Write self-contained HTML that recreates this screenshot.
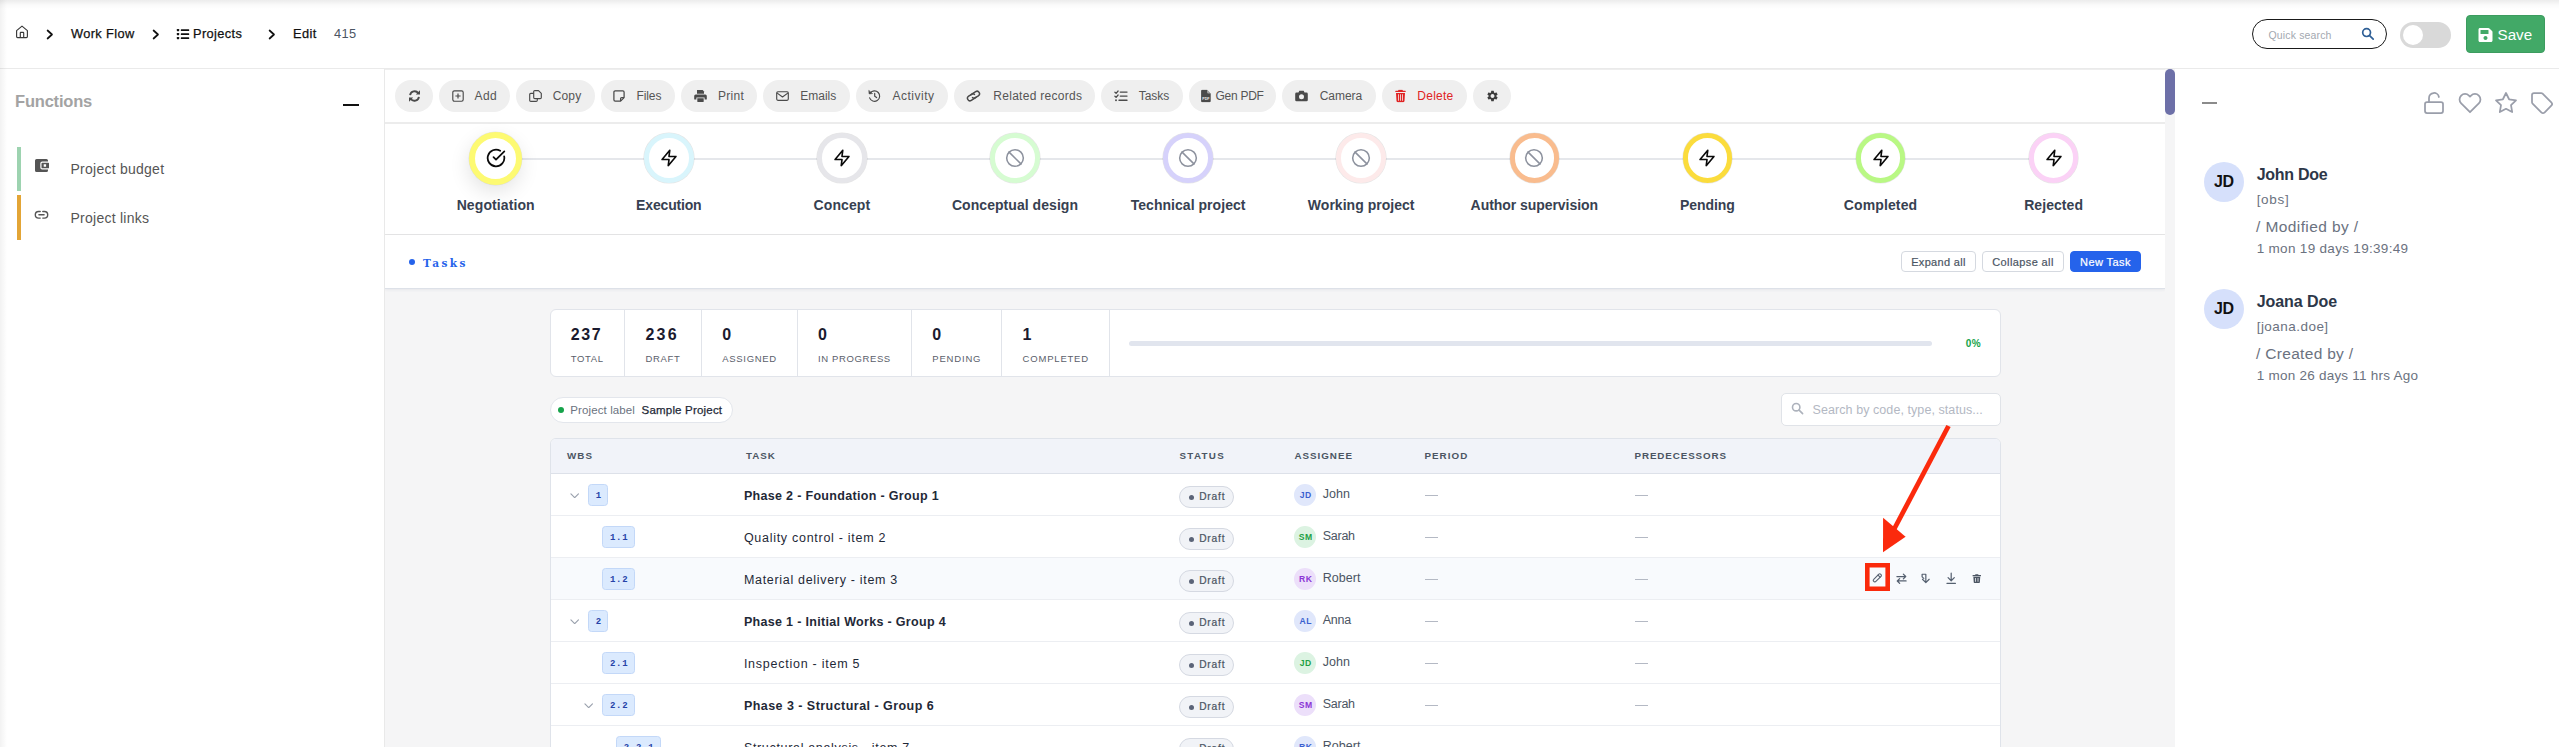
<!DOCTYPE html>
<html lang="en">
<head>
<meta charset="utf-8">
<title>Edit 415 - Projects</title>
<style>
*{box-sizing:border-box;margin:0;padding:0}
html,body{width:2559px;height:747px;overflow:hidden;background:#fff}
body{font-family:"Liberation Sans",Arial,sans-serif;color:#222;position:relative;-webkit-font-smoothing:antialiased}
.abs{position:absolute}
.t{position:absolute;white-space:nowrap;line-height:1;transform:translateY(-50%)}
svg{display:block}
/* ---------- top bar ---------- */
#topbar{position:absolute;left:0;top:0;width:2559px;height:69px;background:#fff}
#topline{position:absolute;left:0;top:68px;width:2559px;height:1px;background:#eaeaea}
#mainline{position:absolute;left:385px;top:69px;width:1780px;height:1px;background:#eeeeee}
#topshadow{position:absolute;left:0;top:0;width:2559px;height:9px;background:linear-gradient(rgba(0,0,0,.075),rgba(0,0,0,.02) 55%,rgba(0,0,0,0))}
#leftshadow{position:absolute;left:0;top:0;width:7px;height:747px;background:linear-gradient(90deg,rgba(0,0,0,.05),rgba(0,0,0,0))}
.crumb{font-size:12.8px;color:#111;letter-spacing:.38px;-webkit-text-stroke:.25px #111}
/* ---------- sidebar ---------- */
#sidebar{position:absolute;left:0;top:69px;width:385px;height:678px;background:#fff;border-right:1px solid #e9e9e9}
/* ---------- main ---------- */
#main{position:absolute;left:385px;top:69px;width:1780px;height:678px;background:#f5f5f6;overflow:hidden}
#toolbar{position:absolute;left:0;top:0;width:1780px;height:55px;background:#fff;border-bottom:2px solid #ececec}
.btn{position:absolute;top:11px;height:32px;border-radius:16px;background:#efefef;color:#555;font-size:12px}
.btn svg{position:absolute;top:50%;transform:translateY(-50%)}
.btn span{position:absolute;top:50%;transform:translateY(-50%);white-space:nowrap;line-height:1;letter-spacing:.35px}
#stepper{position:absolute;left:0;top:55px;width:1780px;height:111px;background:#fff;border-bottom:1px solid #e6e6e6}
.step{position:absolute;top:0;width:0;height:111px}
.step .ring{position:absolute;left:-24.800px;top:9.200px;width:49.600px;height:49.600px;border-radius:50%;border:5.500px solid #ddd;background:#fff;box-shadow:0 0 0 .6px rgba(0,0,0,.10)}
.step .ring svg{position:absolute;left:50%;top:50%;transform:translate(-50%,-50%)}
.step.act .ring{left:-26.500px;top:7.500px;width:53px;height:53px;border-width:6px;box-shadow:0 0 0 .5px rgba(0,0,0,.08),-1px 7px 20px rgba(0,0,0,.11)}
.step span{position:absolute;left:0;top:80.500px;transform:translate(-50%,-50%);white-space:nowrap;font-size:14px;font-weight:700;color:#374151;line-height:1}
#tasksbar{position:absolute;left:0;top:166px;width:1780px;height:54px;background:#fff;border-bottom:1px solid #dde1e8;box-shadow:0 1px 3px rgba(30,40,80,.07)}
.obtn{position:absolute;top:16px;height:21px;border:1px solid #d5d9e0;border-radius:4px;background:#fff;color:#4b5563;font-size:11px;text-align:center}
.obtn span{position:absolute;left:50%;top:50%;transform:translate(-50%,-50%);white-space:nowrap;line-height:1;-webkit-text-stroke:.2px currentColor}
.obtn.pri{background:#2563eb;border-color:#2563eb;color:#fff}
#stats{position:absolute;background:#fff;border:1px solid #e1e4ea;border-radius:6px}
#stats .vdiv{position:absolute;top:0;width:1px;height:100%;background:#e1e4ea}
#stats .t{margin-left:-1px;margin-top:-1px}
#stats .num{margin-top:0;font-size:16px;font-weight:700;color:#1a1a2e}
#stats .lab{font-size:9.500px;color:#5a606b}
#plabel{position:absolute;background:#fff;border:1px solid #e3e6ec;border-radius:13px;font-size:11.500px}
#plabel i{position:absolute;left:7.600px;top:9.800px;width:6px;height:6px;border-radius:50%;background:#16a34a}
#plabel .t{margin-left:-1px;margin-top:-1px}
#tsearch{position:absolute;background:#fff;border:1px solid #e0e3e8;border-radius:5px}
#tsearch .t{margin-left:-1px;margin-top:-1px}
#tbl{position:absolute;background:#fff;border:1px solid #dfe3ea;border-radius:6px 6px 0 0;overflow:hidden}
#tbl .thead{position:absolute;left:0;top:0;width:100%;background:#f1f3f9;border-bottom:1px solid #dde1e9;font-size:9.800px;font-weight:700;color:#4b5563}
#tbl .t{margin-left:-1px;margin-top:-1px}
.tr{position:absolute;left:0;width:100%;border-bottom:1px solid #eceef2}
.tr.hov{background:#f8fafd}
.tr .chev{position:absolute;top:18.600px;margin-left:-2.400px}
.tr .wbs{position:absolute;top:10.300px;height:21.600px;margin-left:-1px;border:1px solid #c3d8f8;border-radius:3.500px;background:#dbeafe}
.tr .wbs b{position:absolute;left:50%;top:50%;transform:translate(-50%,-50%);font-family:"Liberation Mono",monospace;font-size:9px;font-weight:700;color:#2643a8;line-height:1;white-space:nowrap;letter-spacing:.75px;margin-left:.4px;margin-top:.9px}
.tr .task{top:23.200px;color:#1f2937}
.tr .st{position:absolute;left:628.30px;top:12.200px;width:54.800px;height:22px;border:1px solid #d5d9e2;border-radius:11px;background:#f1f3f7}
.tr .st i{position:absolute;left:8.200px;top:7.600px;width:5px;height:5px;border-radius:50%;background:#5b6478}
.tr .st b{position:absolute;left:18.800px;top:50%;transform:translateY(-50%);font-size:10.200px;font-weight:400;-webkit-text-stroke:.22px #4b5563;color:#4b5563;letter-spacing:.8px;line-height:1;margin-top:.3px}
.tr .av{position:absolute;left:743.40px;top:10.100px;width:21.800px;height:21.800px;border-radius:50%}
.tr .av b{position:absolute;left:50%;top:50%;transform:translate(-50%,-50%);font-size:8.600px;font-weight:700;letter-spacing:.5px;line-height:1;margin-left:.3px}
.av.b{background:#e0e7fb}.av.b b{color:#3b5fd0}
.av.g{background:#dcf3e2}.av.g b{color:#22a045}
.av.p{background:#ecdffa}.av.p b{color:#8b35d6}
.tr .nm{margin-top:.4px;left:772.70px;top:21.200px;font-size:12.500px;color:#4b5563}
.tr .dash{position:absolute;top:21.200px;width:13px;height:1px;background:#b4b9c4;margin-left:-1px}
/* ---------- scrollbar ---------- */
#sbtrack{position:absolute;left:2165px;top:69px;width:10.500px;height:678px;background:#f5f5f6}
#sbthumb{position:absolute;left:2165px;top:69px;width:10px;height:46px;border-radius:5px;background:#6d70a8}
/* ---------- right panel ---------- */
#right{position:absolute;left:2175px;top:69px;width:384px;height:678px;background:#fff}
.person{position:absolute;left:0;width:384px;height:100px}
.person .av{position:absolute;left:29px;top:0;width:40px;height:40px;border-radius:50%;background:#d6e0fb}
.person .av span{position:absolute;left:50%;top:50%;transform:translate(-50%,-50%);font-size:16px;font-weight:700;color:#111;letter-spacing:-.2px;line-height:1;margin-left:-.1px}
.person .t{left:81.700px}
.person .nm{font-size:16px;font-weight:700;color:#2d3748}
.person .us{font-size:13.500px;color:#6b7280}
.person .vb{font-size:15.500px;color:#6b7280;margin-left:-.6px}
.person .dt{font-size:13.500px;color:#6b7280}
</style>
</head>
<body>
<div id="topbar">
  <svg class="abs" style="left:15px;top:25px" width="14" height="14" viewBox="0 0 14 14" fill="none" stroke="#3a3a3a" stroke-width="1.15" stroke-linejoin="round" stroke-linecap="round"><path d="M1.6 5.6 L7 1.1 L12.4 5.6 V11.6 a1 1 0 0 1 -1 1 H2.6 a1 1 0 0 1 -1 -1 Z"/><path d="M5.3 12.4 V7.9 a.5 .5 0 0 1 .5 -.5 H8.2 a.5 .5 0 0 1 .5 .5 V12.4"/></svg>
  <svg class="abs" style="left:45px;top:28px" width="10" height="13" viewBox="0 0 10 13" fill="none" stroke="#111" stroke-width="1.7" stroke-linecap="round" stroke-linejoin="round"><path d="M2.600 2.500 L7 6.500 L2.600 10.500"/></svg>
  <span class="t crumb" style="left:71px;top:34px">Work Flow</span>
  <svg class="abs" style="left:151px;top:28px" width="10" height="13" viewBox="0 0 10 13" fill="none" stroke="#111" stroke-width="1.7" stroke-linecap="round" stroke-linejoin="round"><path d="M2.600 2.500 L7 6.500 L2.600 10.500"/></svg>
  <svg class="abs" style="left:176px;top:28px" width="14" height="12" viewBox="0 0 14 12" fill="#111"><rect x=".8" y="1" width="2.4" height="2.2" rx=".6"/><rect x=".8" y="5" width="2.4" height="2.2" rx=".6"/><rect x=".8" y="9" width="2.4" height="2.2" rx=".6"/><rect x="4.8" y="1.3" width="8.4" height="1.6" rx=".5"/><rect x="4.8" y="5.3" width="8.4" height="1.6" rx=".5"/><rect x="4.8" y="9.3" width="8.4" height="1.6" rx=".5"/></svg>
  <span class="t crumb" style="left:193px;top:34px">Projects</span>
  <svg class="abs" style="left:266.800px;top:28px" width="10" height="13" viewBox="0 0 10 13" fill="none" stroke="#111" stroke-width="1.7" stroke-linecap="round" stroke-linejoin="round"><path d="M2.600 2.500 L7 6.500 L2.600 10.500"/></svg>
  <span class="t crumb" style="left:293px;top:34px">Edit</span>
  <span class="t crumb" style="left:334px;top:34px;color:#4b5563;-webkit-text-stroke:0">415</span>
  <!-- quick search -->
  <div class="abs" id="qsearch" style="left:2252px;top:19px;width:135px;height:30px;border:1.5px solid #1a1a1a;border-radius:15px;background:#fff">
    <span class="t" style="left:15.500px;top:14.800px;font-size:10.500px;color:#a3a8b0;letter-spacing:.15px">Quick search</span>
    <svg class="abs" style="left:107.500px;top:7px" width="14" height="14" viewBox="0 0 14 14" fill="none" stroke="#2f5f96" stroke-width="1.7" stroke-linecap="round"><circle cx="5.6" cy="5.6" r="3.9"/><path d="M8.6 8.6 L12.2 12.2"/></svg>
  </div>
  <!-- toggle -->
  <div class="abs" style="left:2400px;top:22px;width:51px;height:26px;border-radius:13px;background:#d9d9d9">
    <div class="abs" style="left:2.600px;top:3px;width:20.400px;height:20.400px;border-radius:50%;background:#fff"></div>
  </div>
  <!-- save -->
  <div class="abs" style="left:2466px;top:15px;width:79px;height:38px;border-radius:4px;background:#42a967;border:1px solid #3c9c5f">
    <svg class="abs" style="left:11px;top:10.500px" width="15" height="16" viewBox="0 0 448 512" fill="#fff"><path d="M433.9 129.900l-83.900-83.900A48 48 0 0 0 316.100 32H48C21.500 32 0 53.500 0 80v352c0 26.500 21.500 48 48 48h352c26.500 0 48-21.500 48-48V163.900a48 48 0 0 0-14.100-33.900zM224 416c-35.300 0-64-28.700-64-64s28.700-64 64-64 64 28.700 64 64-28.700 64-64 64zm96-304.500V212c0 6.600-5.400 12-12 12H76c-6.600 0-12-5.400-12-12V108c0-6.600 5.400-12 12-12h228.500c3.200 0 6.200 1.300 8.500 3.500l3.500 3.500A12 12 0 0 1 320 111.500z"/></svg>
    <span class="t" style="left:30.500px;top:18.700px;font-size:15.200px;color:#fff;letter-spacing:0">Save</span>
  </div>
</div>
<div id="sidebar">
  <span class="t" style="left:15px;top:31.500px;font-size:16.500px;font-weight:700;color:#a3a3a3;letter-spacing:-.2px">Functions</span>
  <div class="abs" style="left:343px;top:34.5px;width:16px;height:2.4px;background:#111"></div>
  <div class="abs" style="left:17px;top:78px;width:4px;height:44px;background:#9dd3b0"></div>
  <svg class="abs" style="left:35px;top:90px" width="14" height="13" viewBox="0 0 14 13"><path fill="#555" fill-rule="evenodd" d="M1.6 0 H11.4 A1.6 1.6 0 0 1 13 1.6 V2.6 H7.2 A1.9 1.9 0 0 0 5.300 4.500 V8.500 A1.9 1.9 0 0 0 7.200 10.400 H13 V11.400 A1.600 1.600 0 0 1 11.400 13 H1.600 A1.600 1.600 0 0 1 0 11.400 V1.600 A1.600 1.600 0 0 1 1.600 0 Z M7.400 3.700 H13.400 A.6 .6 0 0 1 14 4.300 V8.700 A.6 .6 0 0 1 13.400 9.300 H7.400 A.9 .9 0 0 1 6.500 8.400 V4.600 A.9 .9 0 0 1 7.400 3.700 Z M8.700 5.300 V7.700 H11.100 V5.300 Z"/></svg>
  <span class="t" style="left:70.500px;top:100px;font-size:14px;color:#555;letter-spacing:.25px">Project budget</span>
  <div class="abs" style="left:17px;top:126px;width:4px;height:45px;background:#e3a536"></div>
  <svg class="abs" style="left:34px;top:141px" width="15" height="10" viewBox="0 0 15 10" fill="none" stroke="#555" stroke-width="1.4" stroke-linecap="round"><path d="M6.200 1.500 H4.600 a3.300 3.300 0 0 0 0 6.600 H6.200 M8.800 1.500 H10.400 a3.300 3.300 0 0 1 0 6.600 H8.800 M4.900 4.800 H10.100"/></svg>
  <span class="t" style="left:70.500px;top:149px;font-size:14px;color:#555;letter-spacing:.25px">Project links</span>
</div>
<div id="main">
  <div id="toolbar">
  <div class="btn" style="left:10px;width:38px"><svg style="left:12.5px" width="13" height="13" viewBox="0 0 13 13" fill="none" stroke="#4a4a4a" stroke-width="1.9"><path d="M2.1 5.6 A4.500 4.500 0 0 1 10.300 3.700"/><path d="M10.900 7.400 A4.500 4.500 0 0 1 2.700 9.300"/><path d="M12 .8 V5 H7.800 Z" fill="#4a4a4a" stroke="none"/><path d="M1 12.200 V8 H5.200 Z" fill="#4a4a4a" stroke="none"/></svg></div>
  <div class="btn" style="left:54px;width:71px"><svg style="left:13px" width="12" height="12" viewBox="0 0 12 12" fill="none" stroke="#4a4a4a" stroke-width="1.15"><rect x=".8" y=".8" width="10.400" height="10.400" rx="1.600"/><path d="M6 3.400 V8.600 M3.400 6 H8.600" stroke-width="1.2"/></svg><span style="left:35.6px;letter-spacing:0.32px">Add</span></div>
  <div class="btn" style="left:131px;width:79px"><svg style="left:12.500px" width="13" height="12" viewBox="0 0 13 12" fill="none" stroke="#4a4a4a" stroke-width="1.150" stroke-linejoin="round"><path d="M4.700 1.700 a1.100 1.100 0 0 1 1.100 -1.100 H9.500 L12.300 3.400 V7.500 a1.100 1.100 0 0 1 -1.100 1.100 H5.800 a1.100 1.100 0 0 1 -1.100 -1.100 Z"/><path d="M4.700 3.400 H1.800 a1.100 1.100 0 0 0 -1.100 1.100 V10.300 a1.100 1.100 0 0 0 1.100 1.100 H7.200 a1.100 1.100 0 0 0 1.100 -1.100 V8.600"/></svg><span style="left:36.7px;letter-spacing:0.16px">Copy</span></div>
  <div class="btn" style="left:216px;width:74px"><svg style="left:12.4px" width="12" height="12" viewBox="0 0 12 12" fill="none" stroke="#4a4a4a" stroke-width="1.25" stroke-linejoin="round"><path d="M2.200 .9 H9.800 a1.300 1.300 0 0 1 1.300 1.300 V7.600 L7.600 11.100 H2.200 a1.300 1.300 0 0 1 -1.300 -1.300 V2.200 a1.300 1.300 0 0 1 1.300 -1.300 Z"/><path d="M11 7.600 H8.600 a1 1 0 0 0 -1 1 V11"/></svg><span style="left:35.5px;letter-spacing:-0.11px">Files</span></div>
  <div class="btn" style="left:296px;width:76px"><svg style="left:12.6px" width="13" height="13" viewBox="0 0 13 13" fill="#4a4a4a"><path d="M3 .6 H8.700 L10 1.900 V4.200 H3 Z"/><path d="M1.700 4.900 H11.300 A1.500 1.500 0 0 1 12.800 6.400 V9.600 a.5 .5 0 0 1 -.5 .5 H10.600 V7.900 H2.400 V10.100 H.7 a.5 .5 0 0 1 -.5 -.5 V6.400 A1.500 1.500 0 0 1 1.700 4.900 Z"/><path d="M3.300 8.800 H9.700 V12 a.4 .4 0 0 1 -.4 .4 H3.700 a.4 .4 0 0 1 -.4 -.4 Z"/></svg><span style="left:36.9px;letter-spacing:0.3px">Print</span></div>
  <div class="btn" style="left:378px;width:87px"><svg style="left:12.7px" width="13" height="10" viewBox="0 0 13 10" fill="none" stroke="#4a4a4a" stroke-width="1.15" stroke-linejoin="round"><rect x=".7" y=".7" width="11.600" height="8.600" rx="1.200"/><path d="M.9 1.900 L6.500 6 L12.100 1.900"/></svg><span style="left:37.3px;letter-spacing:-0.02px">Emails</span></div>
  <div class="btn" style="left:471px;width:92px"><svg style="left:11.8px" width="13" height="13" viewBox="0 0 13 13" fill="none" stroke="#4a4a4a" stroke-width="1.2" stroke-linecap="round"><path d="M2.200 3.600 A5.200 5.200 0 1 1 1.600 8.400"/><path d="M.8 1.200 L1.100 4.400 L4.200 4.100 Z" fill="#4a4a4a" stroke-width=".6" stroke-linejoin="round"/><path d="M6.700 3.900 V6.700 L8.600 8.100"/></svg><span style="left:36.4px;letter-spacing:0.52px">Activity</span></div>
  <div class="btn" style="left:569px;width:141px"><svg style="left:12.300px" width="15" height="13" viewBox="0 0 15 13" fill="none" stroke="#4a4a4a" stroke-width="1.500" stroke-linecap="round"><g transform="rotate(-33 7.500 6.500)"><path d="M8.900 8.950 H3.300 a2.450 2.450 0 0 1 0 -4.900 H6.900 a2.450 2.450 0 0 1 2.300 1.600"/><path d="M6.100 4.050 H11.700 a2.450 2.450 0 0 1 0 4.900 H8.100 a2.450 2.450 0 0 1 -2.300 -1.600"/></g></svg><span style="left:39.3px;letter-spacing:0.28px">Related records</span></div>
  <div class="btn" style="left:716px;width:82px"><svg style="left:12.5px" width="14" height="12" viewBox="0 0 14 12" fill="none" stroke="#4a4a4a" stroke-width="1.25" stroke-linecap="round" stroke-linejoin="round"><path d="M.9 2.200 L2.100 3.300 L4.100 1"/><path d="M.9 6.200 L2.100 7.300 L4.100 5"/><path d="M6.300 2.100 H13 M6.300 6.100 H13 M5 10.200 H13" stroke-width="1.35"/><circle cx="2" cy="10.200" r=".95" fill="#4a4a4a" stroke="none"/></svg><span style="left:37.7px;letter-spacing:-0.02px">Tasks</span></div>
  <div class="btn" style="left:804px;width:87px"><svg style="left:11.7px" width="10" height="13" viewBox="0 0 10 13"><path fill="#4a4a4a" d="M1.300 .3 H6.100 L9.700 3.900 V11.500 a1.200 1.200 0 0 1 -1.200 1.200 H1.300 a1.200 1.200 0 0 1 -1.200 -1.200 V1.500 A1.200 1.200 0 0 1 1.300 .3 Z"/><path fill="#efefef" d="M6.100 .3 V3.100 a.8 .8 0 0 0 .8 .8 H9.700 Z" opacity=".55"/><text x="4.900" y="10.300" font-family="Liberation Sans,sans-serif" font-size="4.200" font-weight="700" fill="#efefef" text-anchor="middle" textLength="7.200" lengthAdjust="spacingAndGlyphs">PDF</text></svg><span style="left:26.5px;letter-spacing:-0.27px">Gen PDF</span></div>
  <div class="btn" style="left:897.4px;width:93.3px"><svg style="left:12.6px" width="13" height="12" viewBox="0 0 13 12"><path fill="#4a4a4a" fill-rule="evenodd" d="M4.300 .8 H8.700 L9.500 2.500 H11.400 A1.400 1.400 0 0 1 12.800 3.900 V9.900 A1.400 1.400 0 0 1 11.400 11.300 H1.600 A1.400 1.400 0 0 1 .2 9.900 V3.900 A1.400 1.400 0 0 1 1.600 2.500 H3.500 Z M6.500 4.300 a2.500 2.500 0 1 0 0 5 a2.500 2.500 0 1 0 0 -5 Z"/></svg><span style="left:37.3px;letter-spacing:-0.04px">Camera</span></div>
  <div class="btn" style="left:997px;width:85px"><svg style="left:13px" width="11" height="13" viewBox="0 0 11 13"><path fill="#e02424" d="M3.600 .3 H7.400 L8 1.300 H10.300 a.4 .4 0 0 1 .4 .4 V2.500 H.3 V1.700 a.4 .4 0 0 1 .4 -.4 H3 Z"/><path fill="#e02424" fill-rule="evenodd" d="M1 3.400 H10 L9.500 11.600 a1.200 1.200 0 0 1 -1.200 1.100 H2.700 a1.200 1.200 0 0 1 -1.200 -1.100 Z M3.100 4.800 V11.200 H3.900 V4.800 Z M5.100 4.800 V11.200 H5.900 V4.800 Z M7.100 4.800 V11.200 H7.900 V4.800 Z"/></svg><span style="left:35.3px;letter-spacing:0.26px;color:#e02424">Delete</span></div>
  <div class="btn" style="left:1088px;width:38px"><svg style="left:12.5px" width="13" height="13" viewBox="0 0 24 24"><path fill="#3d3d3d" fill-rule="evenodd" d="M19.140 12.940c.04-.3.060-.61.060-.94 0-.32-.02-.64-.07-.94l2.030-1.580a.49.49 0 0 0 .12-.61l-1.920-3.320a.488.488 0 0 0-.59-.22l-2.390.96c-.5-.38-1.030-.7-1.620-.94l-.36-2.540a.484.484 0 0 0-.48-.41h-3.840c-.24 0-.43.170-.47.410l-.36 2.540c-.59.240-1.130.57-1.620.94l-2.390-.96c-.22-.08-.47 0-.59.220L2.740 8.870c-.12.210-.08.470.12.610l2.030 1.580c-.05.300-.09.630-.09.940s.02.640.07.940l-2.030 1.580a.49.49 0 0 0-.12.610l1.920 3.320c.12.220.37.290.59.220l2.390-.96c.5.380 1.030.7 1.620.94l.36 2.540c.05.240.24.410.48.410h3.840c.24 0 .44-.17.470-.41l.36-2.540c.59-.24 1.130-.56 1.620-.94l2.390.96c.22.080.47 0 .59-.22l1.920-3.320c.12-.22.070-.47-.12-.61l-2.010-1.580zM12 15.600c-1.980 0-3.600-1.620-3.600-3.600s1.620-3.600 3.600-3.600 3.600 1.620 3.600 3.600-1.620 3.600-3.600 3.600z"/></svg></div>
</div>
  <div id="stepper">
  <div class="abs" style="left:111px;top:34px;width:1558px;height:2px;background:#e5e7eb"></div>
  <div class="step act" style="left:110.7px"><div class="ring" style="border-color:#fdfa72"><svg width="20" height="20" viewBox="0 0 24 24" fill="none" stroke="#0a0a0a" stroke-width="2.1" stroke-linejoin="round" stroke-linecap="round"><path d="M21.801 10 A10 10 0 1 1 17 3.335"/><path d="M9 11 L12 14 L22 4"/></svg></div><span style="letter-spacing:0.1px">Negotiation</span></div>
  <div class="step" style="left:283.8px"><div class="ring" style="border-color:#d9f5fc"><svg width="18.500" height="18.500" viewBox="0 0 24 24" fill="none" stroke="#0a0a0a" stroke-width="2.100" stroke-linejoin="round" stroke-linecap="round"><path d="M13 2 L3 14 H12 L11 22 L21 10 H12 Z"/></svg></div><span style="letter-spacing:-0.17px">Execution</span></div>
  <div class="step" style="left:456.9px"><div class="ring" style="border-color:#e6e6ea"><svg width="18.500" height="18.500" viewBox="0 0 24 24" fill="none" stroke="#0a0a0a" stroke-width="2.100" stroke-linejoin="round" stroke-linecap="round"><path d="M13 2 L3 14 H12 L11 22 L21 10 H12 Z"/></svg></div><span style="letter-spacing:0.1px">Concept</span></div>
  <div class="step" style="left:630.0px"><div class="ring" style="border-color:#d6fcd2"><svg width="20" height="20" viewBox="0 0 24 24" fill="none" stroke="#8d929e" stroke-width="1.850" stroke-linecap="round"><circle cx="12" cy="12" r="10"/><path d="M4.900 4.900 L19.100 19.100"/></svg></div><span style="letter-spacing:0.05px">Conceptual design</span></div>
  <div class="step" style="left:803.1px"><div class="ring" style="border-color:#d6d2fb"><svg width="20" height="20" viewBox="0 0 24 24" fill="none" stroke="#8d929e" stroke-width="1.850" stroke-linecap="round"><circle cx="12" cy="12" r="10"/><path d="M4.900 4.900 L19.100 19.100"/></svg></div><span style="letter-spacing:0.04px">Technical project</span></div>
  <div class="step" style="left:976.2px"><div class="ring" style="border-color:#fdeaea"><svg width="20" height="20" viewBox="0 0 24 24" fill="none" stroke="#8d929e" stroke-width="1.850" stroke-linecap="round"><circle cx="12" cy="12" r="10"/><path d="M4.900 4.900 L19.100 19.100"/></svg></div><span style="letter-spacing:0.03px">Working project</span></div>
  <div class="step" style="left:1149.3px"><div class="ring" style="border-color:#f9bc8e"><svg width="20" height="20" viewBox="0 0 24 24" fill="none" stroke="#8d929e" stroke-width="1.850" stroke-linecap="round"><circle cx="12" cy="12" r="10"/><path d="M4.900 4.900 L19.100 19.100"/></svg></div><span style="letter-spacing:-0.05px">Author supervision</span></div>
  <div class="step" style="left:1322.4px"><div class="ring" style="border-color:#fbdc3c"><svg width="18.500" height="18.500" viewBox="0 0 24 24" fill="none" stroke="#0a0a0a" stroke-width="2.100" stroke-linejoin="round" stroke-linecap="round"><path d="M13 2 L3 14 H12 L11 22 L21 10 H12 Z"/></svg></div><span style="letter-spacing:-0.05px">Pending</span></div>
  <div class="step" style="left:1495.5px"><div class="ring" style="border-color:#b9f884"><svg width="18.500" height="18.500" viewBox="0 0 24 24" fill="none" stroke="#0a0a0a" stroke-width="2.100" stroke-linejoin="round" stroke-linecap="round"><path d="M13 2 L3 14 H12 L11 22 L21 10 H12 Z"/></svg></div><span style="letter-spacing:0.12px">Completed</span></div>
  <div class="step" style="left:1668.6px"><div class="ring" style="border-color:#fbd2f6"><svg width="18.500" height="18.500" viewBox="0 0 24 24" fill="none" stroke="#0a0a0a" stroke-width="2.100" stroke-linejoin="round" stroke-linecap="round"><path d="M13 2 L3 14 H12 L11 22 L21 10 H12 Z"/></svg></div><span style="letter-spacing:0.06px">Rejected</span></div>
</div>
  <div id="stats" style="left:164.75px;top:240.4px;width:1450.75px;height:67.600px">
  <span class="t num" style="left:20.90px;top:24.9px;letter-spacing:1.65px">237</span><span class="t lab" style="left:20.90px;top:49.2px;letter-spacing:0.69px">TOTAL</span>
  <div class="vdiv" style="left:73.25px"></div>
  <span class="t num" style="left:95.65px;top:24.9px;letter-spacing:2.3px">236</span><span class="t lab" style="left:95.65px;top:49.2px;letter-spacing:0.68px">DRAFT</span>
  <div class="vdiv" style="left:150.15px"></div>
  <span class="t num" style="left:172.55px;top:24.9px;letter-spacing:0px">0</span><span class="t lab" style="left:172.55px;top:49.2px;letter-spacing:0.67px">ASSIGNED</span>
  <div class="vdiv" style="left:245.95px"></div>
  <span class="t num" style="left:268.35px;top:24.9px;letter-spacing:0px">0</span><span class="t lab" style="left:268.35px;top:49.2px;letter-spacing:0.61px">IN PROGRESS</span>
  <div class="vdiv" style="left:360.15px"></div>
  <span class="t num" style="left:382.55px;top:24.9px;letter-spacing:0px">0</span><span class="t lab" style="left:382.55px;top:49.2px;letter-spacing:0.82px">PENDING</span>
  <div class="vdiv" style="left:450.45px"></div>
  <span class="t num" style="left:472.85px;top:24.9px;letter-spacing:0px">1</span><span class="t lab" style="left:472.85px;top:49.2px;letter-spacing:0.8px">COMPLETED</span>
  <div class="vdiv" style="left:558.05px"></div>
  <div class="abs" style="left:578.55px;top:30.600px;width:803px;height:5px;border-radius:3px;background:#e1e5ee"></div>
  <span class="t" style="left:1415.95px;top:34.2px;font-weight:700;font-size:10px;color:#16a34a;letter-spacing:.6px">0%</span>
</div>
<div id="plabel" style="left:164.7px;top:327.6px;width:183.800px;height:26.500px"><i></i><span class="t" style="left:20.600px;top:14.400px;color:#6b7280;letter-spacing:.11px">Project label</span><span class="t" style="left:91.900px;top:14.400px;color:#1f2937;letter-spacing:.19px;-webkit-text-stroke:.25px #1f2937">Sample Project</span></div>
<div id="tsearch" style="left:1396.4px;top:324.3px;width:219.2px;height:32.4px"><svg class="abs" style="left:8.300px;top:7.700px" width="13" height="13" viewBox="0 0 13 13" fill="none" stroke="#adb2bc" stroke-width="1.600" stroke-linecap="round"><circle cx="5.200" cy="5.200" r="3.700"/><path d="M8.100 8.100 L11.600 11.600"/></svg><span class="t" style="left:31.200px;top:16.600px;font-size:12.500px;color:#b3b8c3;letter-spacing:.07px">Search by code, type, status...</span></div>
<div id="tbl" style="left:165.10px;top:369px;width:1451.40px;height:320px">
  <div class="thead" style="height:35px">
    <span class="t" style="left:16.90px;top:18.10px;letter-spacing:1.1px">WBS</span>
    <span class="t" style="left:196.00px;top:18.10px;letter-spacing:0.95px">TASK</span>
    <span class="t" style="left:629.40px;top:18.10px;letter-spacing:1.3px">STATUS</span>
    <span class="t" style="left:744.40px;top:18.10px;letter-spacing:0.98px">ASSIGNEE</span>
    <span class="t" style="left:874.30px;top:18.10px;letter-spacing:1.08px">PERIOD</span>
    <span class="t" style="left:1084.40px;top:18.10px;letter-spacing:0.9px">PREDECESSORS</span>
  </div>
  <div class="tr" style="top:35px;height:42px">
    <svg class="chev" style="left:21.50px" width="9.400" height="5.640" viewBox="0 0 10 6" fill="none" stroke="#9aa1ad" stroke-width="1.200" stroke-linecap="round" stroke-linejoin="round"><path d="M1 1 L5 5 L9 1"/></svg>
    <span class="wbs" style="left:38.40px;width:19.8px"><b>1</b></span>
    <span class="t task" style="left:193.80px;font-weight:700;font-size:12.500px;letter-spacing:0.32px">Phase 2 - Foundation - Group 1</span>
    <span class="st"><i></i><b>Draft</b></span>
    <span class="av b"><b>JD</b></span><span class="t nm" style="letter-spacing:0.02px">John</span>
    <i class="dash" style="left:874.70px"></i><i class="dash" style="left:1084.70px"></i>
  </div>
  <div class="tr" style="top:77px;height:42px">
    <span class="wbs" style="left:52.20px;width:33px"><b>1.1</b></span>
    <span class="t task" style="left:193.80px;top:22.500px;font-size:12.500px;letter-spacing:.72px">Quality control - item 2</span>
    <span class="st"><i></i><b>Draft</b></span>
    <span class="av g"><b>SM</b></span><span class="t nm" style="letter-spacing:-0.27px">Sarah</span>
    <i class="dash" style="left:874.70px"></i><i class="dash" style="left:1084.70px"></i>
  </div>
  <div class="tr hov" style="top:119px;height:42px">
    <span class="wbs" style="left:52.20px;width:33px"><b>1.2</b></span>
    <span class="t task" style="left:193.80px;top:22.500px;font-size:12.500px;letter-spacing:.69px">Material delivery - item 3</span>
    <span class="st"><i></i><b>Draft</b></span>
    <span class="av p"><b>RK</b></span><span class="t nm" style="letter-spacing:0.05px">Robert</span>
    <i class="dash" style="left:874.70px"></i><i class="dash" style="left:1084.70px"></i>
    <svg class="abs" style="left:1321.00px;top:15.10px" width="10.600" height="9.800" viewBox="0 0 11 11" fill="none" stroke="#556070" stroke-width="1.250" stroke-linejoin="round" stroke-linecap="round"><path d="M7.300 1.300 a1.250 1.250 0 0 1 1.800 0 l.6 .6 a1.250 1.250 0 0 1 0 1.800 L3.900 9.500 a1.400 1.400 0 0 1 -2.300 -.1 a1.400 1.400 0 0 1 -.1 -2.300 Z"/><path d="M6.300 2.400 L8.600 4.700"/></svg>
    <svg class="abs" style="left:1345.10px;top:14.90px" width="11" height="11.500" viewBox="0 0 12 12" fill="none" stroke="#556070" stroke-width="1.350" stroke-linejoin="round" stroke-linecap="round"><path d="M1 3.600 H10.600 M8 1 L10.600 3.600 L8 6.200"/><path d="M11 8.400 H1.400 M4 5.800 L1.400 8.400 L4 11"/></svg>
    <svg class="abs" style="left:1370.20px;top:15.20px" width="9.300" height="10.900" viewBox="0 0 10 11" fill="none" stroke="#556070" stroke-width="1.300" stroke-linejoin="round" stroke-linecap="round"><path d="M1.200 1 H5.200 V9.600 M1.200 1 V3.800 L3 5.400 M1.600 6.400 L5.200 10 L8.800 6.400"/></svg>
    <svg class="abs" style="left:1395.30px;top:14.30px" width="10.400" height="12.700" viewBox="0 0 11 13" fill="none" stroke="#556070" stroke-width="1.300" stroke-linejoin="round" stroke-linecap="round"><path d="M5.500 1 V9 M2.200 5.800 L5.500 9.100 L8.800 5.800 M1 11.800 H10"/></svg>
    <svg class="abs" style="left:1420.60px;top:16.00px" width="9.600" height="9.300" viewBox="0 0 10 10"><path fill="#4b5563" d="M3.600 .2 H6.400 L6.900 1.100 H9.200 a.4 .4 0 0 1 .4 .4 V2.300 H.4 V1.500 a.4 .4 0 0 1 .4 -.4 H3.100 Z"/><path fill="#4b5563" fill-rule="evenodd" d="M1.300 3 H8.700 L8.300 8.800 a1 1 0 0 1 -1 .9 H2.700 a1 1 0 0 1 -1 -.9 Z M3.300 4.200 V8.400 H4.100 V4.200 Z M5.900 4.200 V8.400 H6.700 V4.200 Z"/></svg>
    <div class="abs" style="left:1314.20px;top:5.00px;width:24.600px;height:27.900px;box-shadow:inset 0 0 0 4.600px #fa2a0c"></div>
  </div>
  <div class="tr" style="top:161px;height:42px">
    <svg class="chev" style="left:21.50px" width="9.400" height="5.640" viewBox="0 0 10 6" fill="none" stroke="#9aa1ad" stroke-width="1.200" stroke-linecap="round" stroke-linejoin="round"><path d="M1 1 L5 5 L9 1"/></svg>
    <span class="wbs" style="left:38.40px;width:19.8px"><b>2</b></span>
    <span class="t task" style="left:193.80px;font-weight:700;font-size:12.500px;letter-spacing:0.32px">Phase 1 - Initial Works - Group 4</span>
    <span class="st"><i></i><b>Draft</b></span>
    <span class="av b"><b>AL</b></span><span class="t nm" style="letter-spacing:-0.25px">Anna</span>
    <i class="dash" style="left:874.70px"></i><i class="dash" style="left:1084.70px"></i>
  </div>
  <div class="tr" style="top:203px;height:42px">
    <span class="wbs" style="left:52.20px;width:33px"><b>2.1</b></span>
    <span class="t task" style="left:193.80px;top:22.500px;font-size:12.500px;letter-spacing:.75px">Inspection - item 5</span>
    <span class="st"><i></i><b>Draft</b></span>
    <span class="av g"><b>JD</b></span><span class="t nm" style="letter-spacing:0.02px">John</span>
    <i class="dash" style="left:874.70px"></i><i class="dash" style="left:1084.70px"></i>
  </div>
  <div class="tr" style="top:245px;height:42px">
    <svg class="chev" style="left:35.50px" width="9.400" height="5.640" viewBox="0 0 10 6" fill="none" stroke="#9aa1ad" stroke-width="1.200" stroke-linecap="round" stroke-linejoin="round"><path d="M1 1 L5 5 L9 1"/></svg>
    <span class="wbs" style="left:52.20px;width:33px"><b>2.2</b></span>
    <span class="t task" style="left:193.80px;font-weight:700;font-size:12.500px;letter-spacing:0.46px">Phase 3 - Structural - Group 6</span>
    <span class="st"><i></i><b>Draft</b></span>
    <span class="av p"><b>SM</b></span><span class="t nm" style="letter-spacing:-0.27px">Sarah</span>
    <i class="dash" style="left:874.70px"></i><i class="dash" style="left:1084.70px"></i>
  </div>
  <div class="tr" style="top:287px;height:42px">
    <span class="wbs" style="left:66.30px;width:44.5px"><b>2.2.1</b></span>
    <span class="t task" style="left:193.80px;top:22.500px;font-size:12.500px;letter-spacing:.67px">Structural analysis - item 7</span>
    <span class="st"><i></i><b>Draft</b></span>
    <span class="av b"><b>RK</b></span><span class="t nm" style="letter-spacing:0.05px">Robert</span>
    <i class="dash" style="left:874.70px"></i><i class="dash" style="left:1084.70px"></i>
  </div>
</div>
  <div id="tasksbar">
    <div class="abs" style="left:24px;top:24px;width:6px;height:6px;border-radius:50%;background:#2563eb"></div>
    <span class="t" style="left:38px;top:27.500px;font-family:'DejaVu Serif','Liberation Mono',monospace;font-weight:700;font-size:10.500px;letter-spacing:2.400px;color:#2563eb">Tasks</span>
    <div class="obtn" style="left:1516px;width:75px"><span style="letter-spacing:.33px">Expand all</span></div>
    <div class="obtn" style="left:1597px;width:82px"><span style="letter-spacing:.39px">Collapse all</span></div>
    <div class="obtn pri" style="left:1685px;width:71px"><span style="letter-spacing:.42px">New Task</span></div>
  </div>
</div>
<div id="topline"></div><div id="mainline"></div>
<div id="sbtrack"></div><div id="sbthumb"></div>
<div id="right">
  <div class="abs" style="left:27px;top:33.3px;width:15px;height:1.6px;background:#8b8b8b"></div>
  <svg class="abs" style="left:247.200px;top:21.800px" width="24" height="24" viewBox="0 0 24 24" fill="none" stroke="#9a9eaa" stroke-width="1.750" stroke-linecap="round" stroke-linejoin="round"><rect x="3" y="11" width="18" height="11" rx="2"/><path d="M7 11 V7 a5 5 0 0 1 9.900 -1"/></svg>
  <svg class="abs" style="left:283px;top:22px" width="24" height="24" viewBox="0 0 24 24" fill="none" stroke="#9a9eaa" stroke-width="1.750" stroke-linecap="round" stroke-linejoin="round"><path d="M20.840 4.610a5.500 5.500 0 0 0-7.780 0L12 5.670l-1.060-1.060a5.500 5.500 0 0 0-7.780 7.780l1.060 1.060L12 21.230l7.780-7.780 1.060-1.060a5.500 5.500 0 0 0 0-7.780z"/></svg>
  <svg class="abs" style="left:319.200px;top:22px" width="24" height="24" viewBox="0 0 24 24" fill="none" stroke="#9a9eaa" stroke-width="1.750" stroke-linejoin="round"><path d="M12 2 L15.090 8.260 L22 9.270 L17 14.140 L18.180 21.020 L12 17.770 L5.820 21.020 L7 14.140 L2 9.270 L8.910 8.260 Z"/></svg>
  <svg class="abs" style="left:355px;top:22px" width="24" height="24" viewBox="0 0 24 24" fill="none" stroke="#9a9eaa" stroke-width="1.750" stroke-linejoin="round"><path d="M12.586 2.586A2 2 0 0 0 11.172 2H4a2 2 0 0 0-2 2v7.172a2 2 0 0 0 .586 1.414l8.704 8.704a2.426 2.426 0 0 0 3.420 0l6.580-6.580a2.426 2.426 0 0 0 0-3.420z"/></svg>
  <div class="person" style="top:93px">
    <div class="av"><span>JD</span></div>
    <span class="t nm" style="top:13px;letter-spacing:-0.27px">John Doe</span>
    <span class="t us" style="top:37.6px;letter-spacing:0.68px">[obs]</span>
    <span class="t vb" style="top:64.8px;letter-spacing:0.39px">/ Modified by /</span>
    <span class="t dt" style="top:87.2px;letter-spacing:0.31px">1 mon 19 days 19:39:49</span>
  </div>
  <div class="person" style="top:220px">
    <div class="av"><span>JD</span></div>
    <span class="t nm" style="top:13px;letter-spacing:-0.07px">Joana Doe</span>
    <span class="t us" style="top:37.6px;letter-spacing:0.46px">[joana.doe]</span>
    <span class="t vb" style="top:64.8px;letter-spacing:0.3px">/ Created by /</span>
    <span class="t dt" style="top:87.2px;letter-spacing:0.24px">1 mon 26 days 11 hrs Ago</span>
  </div>
</div>
<svg class="abs" style="left:1860px;top:415px;pointer-events:none" width="120" height="150" viewBox="1860 415 120 150"><path d="M1948.500 426 L1894.200 529" stroke="#fb2a0d" stroke-width="4.800" fill="none"/><path d="M1883 552.300 L1883.100 517.700 L1905.600 536.700 Z" fill="#fb2a0d"/></svg>
<div id="topshadow"></div>
<div id="leftshadow"></div>
</body>
</html>
